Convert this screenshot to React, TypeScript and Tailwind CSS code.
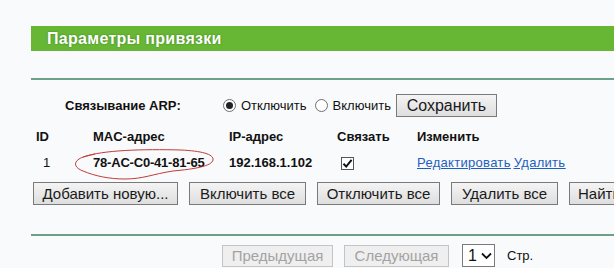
import React from "react";

const btn =
  "h-[23px] shrink-0 whitespace-nowrap border border-[#7a7a7a] bg-gradient-to-b from-[#f4f4f4] to-[#dedede] px-2 text-[15px] leading-none text-[#1a1a1a]";

const btnOff =
  "h-[22px] shrink-0 whitespace-nowrap border border-[#c4c4c4] bg-[#efefef] px-2 text-[15px] leading-none text-[#a3a3a3]";

const Radio = ({ on }: { on?: boolean }) => (
  <span className="flex h-[13px] w-[13px] items-center justify-center rounded-full border border-[#6f6f6f] bg-white">
    {on && <span className="h-[7px] w-[7px] rounded-full bg-[#222]" />}
  </span>
);

const App = () => {
  return (
    <div className="h-[268px] w-[614px] overflow-hidden bg-[#f9fafb] pt-[26px] font-['Liberation_Sans',Arial,sans-serif] text-[13px] text-[#111]">
      <div className="ml-[31px] flex h-[25px] items-center bg-[#67b734] pl-[16px] text-[16px] font-bold tracking-[0.3px] text-white [text-shadow:0_0_2px_rgba(0,60,0,0.45)]">
        Параметры привязки
      </div>
      <div className="ml-[31px] mt-[27px] h-[2px] bg-[#6e9f88]" />

      <div className="mt-[14px] flex h-[23px] items-center whitespace-nowrap">
        <span className="ml-[65px] font-bold">Связывание ARP:</span>
        <span className="ml-[42px] flex items-center gap-[5px]">
          <Radio on />
          Отключить
        </span>
        <span className="ml-[8px] flex items-center gap-[5px]">
          <Radio />
          Включить
        </span>
        <button className={`${btn} ml-[5px] w-[101px] text-[16px]`}>Сохранить</button>
      </div>

      <div className="ml-[31px] mt-[8px] grid h-[24px] grid-cols-[62px_136px_108px_80px_1fr] items-center whitespace-nowrap font-bold">
        <span className="pl-[5px]">ID</span>
        <span>MAC-адрес</span>
        <span>IP-адрес</span>
        <span>Связать</span>
        <span>Изменить</span>
      </div>

      <div className="relative ml-[31px] mt-[2px] grid h-[24px] grid-cols-[62px_136px_108px_80px_1fr] items-center whitespace-nowrap">
        <span className="pl-[12px]">1</span>
        <span className="font-bold tracking-[-0.2px]">78-AC-C0-41-81-65</span>
        <span className="font-bold">192.168.1.102</span>
        <span className="pl-[4px]">
          <span className="flex h-[13px] w-[13px] items-center justify-center border border-[#555] bg-white">
            <svg width="11" height="11" viewBox="0 0 11 11">
              <path d="M1.5 5.8 L4.2 8.6 L9.6 1.8" fill="none" stroke="#111" strokeWidth="2" />
            </svg>
          </span>
        </span>
        <span className="flex gap-[3px] tracking-[0.3px] text-[#1d5fc0] underline">
          <a href="#">Редактировать</a>
          <a href="#">Удалить</a>
        </span>
        <svg
          className="pointer-events-none absolute left-[42px] top-[-2px]"
          width="144"
          height="32"
          viewBox="0 0 144 32"
        >
          <path
            d="M10 8 C 30 1, 70 0, 108 1 C 128 2, 141 5, 140 11 C 139 17, 122 20, 100 22 C 80 25, 70 30, 52 30 C 36 30, 22 27, 10 22 C 2 19, 0 14, 6 10 C 9 8, 14 7, 22 5"
            fill="none"
            stroke="#c23a3a"
            strokeWidth="1"
          />
        </svg>
      </div>

      <div className="ml-[33px] mt-[7px] flex gap-[11px]">
        <button className={`${btn} w-[145px]`}>Добавить новую...</button>
        <button className={`${btn} w-[117px]`}>Включить все</button>
        <button className={`${btn} w-[123px]`}>Отключить все</button>
        <button className={`${btn} w-[107px]`}>Удалить все</button>
        <button className={`${btn} w-[100px] text-left`}>Найти</button>
      </div>

      <div className="ml-[31px] mt-[29px] h-[2px] bg-[#6e9f88]" />

      <div className="ml-[222px] mt-[8px] flex items-center whitespace-nowrap">
        <button className={`${btnOff} w-[111px]`}>Предыдущая</button>
        <button className={`${btnOff} ml-[11px] w-[105px]`}>Следующая</button>
        <span className="ml-[13px] flex h-[23px] w-[33px] items-center gap-[4px] border border-[#7a7a7a] bg-white pl-[5px] text-[16px]">
          1
          <svg width="11" height="8" viewBox="0 0 11 8">
            <path d="M1 1.5 L5.5 6 L10 1.5" fill="none" stroke="#111" strokeWidth="1.8" />
          </svg>
        </span>
        <span className="ml-[12px]">Стр.</span>
      </div>
    </div>
  );
};

export default App;
